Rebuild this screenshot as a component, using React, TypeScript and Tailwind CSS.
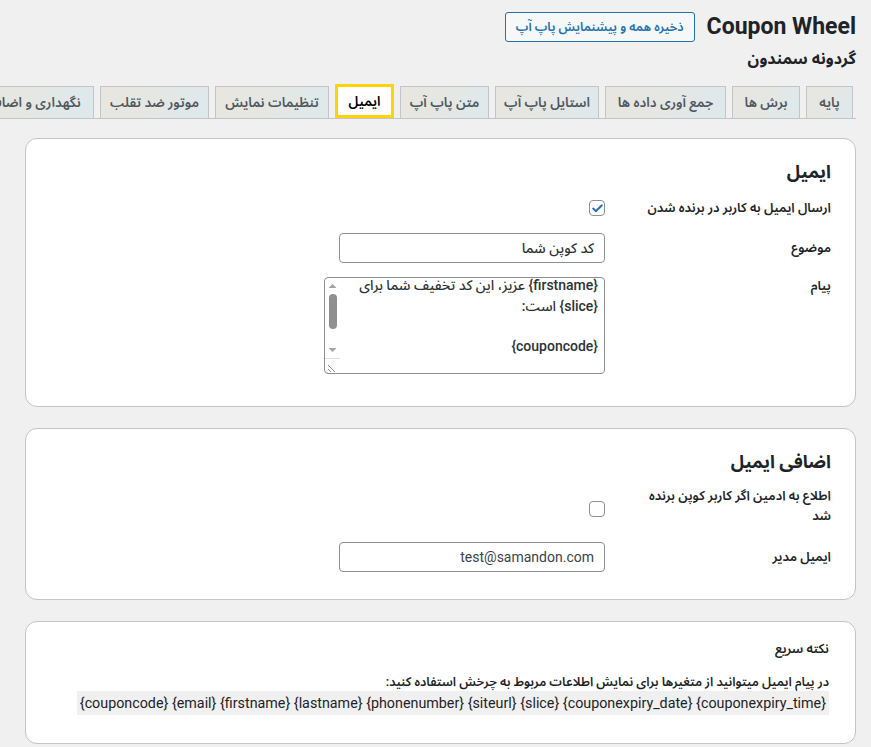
import { Check } from 'lucide-react'

const tabs = [
  { label: 'پایه', w: 'w-[47px]' },
  { label: 'برش ها', w: 'w-[68px]' },
  { label: 'جمع آوری داده ها', w: 'w-[121px]' },
  { label: 'استایل پاپ آپ', w: 'w-[104px]' },
  { label: 'متن پاپ آپ', w: 'w-[89px]' },
  { label: 'ایمیل', w: 'w-[59px]', active: true },
  { label: 'تنظیمات نمایش', w: 'w-[114px]' },
  { label: 'موتور ضد تقلب', w: 'w-[109px]' },
  { label: 'نگهداری و اضافات', w: 'w-[130px]' },
]

function Checkbox({ checked }: { checked?: boolean }) {
  return (
    <span className="flex h-4 w-4 items-center justify-center rounded-[4px] border border-[#8c8f94] bg-white">
      {checked && <Check className="h-[13px] w-[13px] text-[#2271b1]" strokeWidth={3.5} />}
    </span>
  )
}

function TextField({ value, ltr }: { value: string; ltr?: boolean }) {
  return (
    <div
      className={`flex h-[30px] w-[266px] items-center rounded-[4px] border border-[#8c8f94] bg-white px-[10px] text-[14px] ${
        ltr ? 'font-normal text-[#3c434a]' : 'font-medium text-[#2c3338]'
      }`}
    >
      <span dir={ltr ? 'ltr' : 'rtl'} className="w-full text-right">
        {value}
      </span>
    </div>
  )
}

function FakeTextarea() {
  return (
    <div className="flex h-[97px] w-[281px] overflow-hidden rounded-[4px] border border-[#8c8f94] bg-white">
      <div className="flex-1 pr-[6px] text-[14px] font-medium leading-[21px] text-[#2c3338]">
        <div className="-mt-[3px]">{'{firstname}'} عزیز، این کد تخفیف شما برای</div>
        <div>{'{slice}'} است:</div>
        <div className="h-[21px]" />
        <div className="-mt-[2px]">{'{couponcode}'}</div>
      </div>
      <div className="flex w-[15px] flex-col">
        <div className="flex flex-1 flex-col items-center">
          <svg width="9" height="6" viewBox="0 0 9 6" className="mt-[5px]">
            <path d="M0.5 5 L4.5 1 L8.5 5 Z" fill="#a3a3a3" />
          </svg>
          <div className="mt-[5px] h-[35px] w-[8px] rounded-full bg-[#8f8f8f]" />
          <div className="flex-1" />
          <svg width="9" height="6" viewBox="0 0 9 6" className="mb-[5px]">
            <path d="M0.5 1 L4.5 5 L8.5 1 Z" fill="#a3a3a3" />
          </svg>
        </div>
        <div className="h-[15px] border-t border-[#dcdcde]">
          <svg width="14" height="14" viewBox="0 0 14 14">
            <path d="M2 6 L9 13 M2 10 L5 13" stroke="#8c8c8c" strokeWidth="1" />
          </svg>
        </div>
      </div>
    </div>
  )
}

export default function App() {
  return (
    <div
      dir="rtl"
      className="h-[747px] overflow-hidden bg-[#f0f0f1] font-['Roboto','Noto_Sans_Arabic','DejaVu_Sans',sans-serif] text-[#1d2327]"
    >
      <div className="pr-[15px]">
        <div className="flex items-center gap-[12px] pt-[12px]">
          <h1 dir="ltr" className="text-[23px] font-bold leading-[30px]">
            Coupon Wheel
          </h1>
          <button className="h-[30px] rounded-[3px] border border-[#2271b1] bg-[#f6f7f7] px-[10px] text-[12.5px] font-semibold text-[#2271b1]">
            ذخیره همه و پیشنمایش پاپ آپ
          </button>
        </div>
        <h2 className="mt-[6px] text-[16px] font-bold leading-[22px]">گردونه سمندون</h2>

        <div className="mt-[16px] flex h-[33px] items-end gap-[6px] border-b border-[#c3c4c7] pr-[3px]">
          {tabs.map((t) =>
            t.active ? (
              <div
                key={t.label}
                className={`${t.w} flex h-[34px] shrink-0 items-center justify-center whitespace-nowrap border-[3px] border-[#ffd400] bg-white text-[13.5px] font-semibold text-black`}
              >
                {t.label}
              </div>
            ) : (
              <div
                key={t.label}
                className={`${t.w} -mb-px flex h-[33px] shrink-0 items-center justify-center whitespace-nowrap border border-[#c3c4c7] bg-[linear-gradient(115deg,#e8e6df_0%,#e5e7e4_50%,#dde9ed_100%)] text-[13.5px] font-semibold text-[#50575e]`}
              >
                {t.label}
              </div>
            ),
          )}
        </div>
      </div>

      <div className="ml-[25px] mr-[15px] mt-[19px] flex flex-col gap-[21px]">
        <section className="h-[269px] rounded-[12px] border border-[#c3c4c7] bg-white pr-[24px] pt-[21px]">
          <h3 className="text-[18px] font-bold leading-[24px]">ایمیل</h3>
          <div className="mt-[12px] grid grid-cols-[210px_1fr] items-center gap-x-[16px] gap-y-[13px]">
            <div className="text-[13px] font-semibold leading-[24px]">ارسال ایمیل به کاربر در برنده شدن</div>
            <div className="flex h-[24px] items-center">
              <Checkbox checked />
            </div>
            <div className="text-[13px] font-semibold">موضوع</div>
            <TextField value="کد کوپن شما" />
            <div className="self-start pt-[1px] text-[13px] font-semibold leading-[18px]">پیام</div>
            <div className="mt-[1px]">
              <FakeTextarea />
            </div>
          </div>
        </section>

        <section className="h-[172px] rounded-[12px] border border-[#c3c4c7] bg-white pr-[24px] pt-[21px]">
          <h3 className="text-[18px] font-bold leading-[24px]">اضافی ایمیل</h3>
          <div className="mt-[12px] grid grid-cols-[210px_1fr] items-center gap-x-[16px] gap-y-[16px]">
            <div className="text-[13px] font-semibold leading-[20px]">
              <span className="whitespace-nowrap">اطلاع به ادمین اگر کاربر کوپن برنده</span>
              <br />
              شد
            </div>
            <div className="pt-[6px]">
              <Checkbox />
            </div>
            <div className="text-[13px] font-semibold">ایمیل مدیر</div>
            <TextField value="test@samandon.com" ltr />
          </div>
        </section>

        <section className="h-[123px] rounded-[12px] border border-[#c3c4c7] bg-white pl-[24px] pr-[26px] pt-[18px]">
          <div className="text-[13px] font-semibold leading-[18px]">نکته سریع</div>
          <div className="mt-[15px] text-[12.6px] font-semibold leading-[18px]">
            در پیام ایمیل میتوانید از متغیرها برای نمایش اطلاعات مربوط به چرخش استفاده کنید:
          </div>
          <div>
            <code
              dir="ltr"
              className="inline-block bg-[#f0f0f1] px-[3px] py-[2px] font-['Roboto',sans-serif] text-[14.3px] leading-[20px] text-[#1d2327]"
            >
              {'{couponcode} {email} {firstname} {lastname} {phonenumber} {siteurl} {slice} {couponexpiry_date} {couponexpiry_time}'}
            </code>
          </div>
        </section>
      </div>
    </div>
  )
}
